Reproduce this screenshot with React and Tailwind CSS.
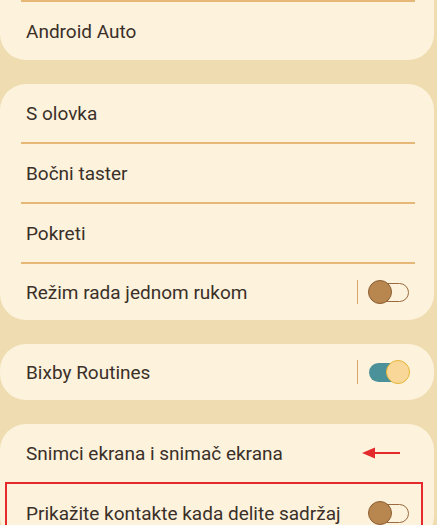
import React from "react";

function Divider() {
  return <div className="ml-[21px] mr-[19px] h-[2px] bg-[#e6b878]" />;
}

function Toggle({ on }) {
  if (on) {
    return (
      <div className="relative h-[19px] w-[40px] rounded-full bg-[#4b9199]">
        <div className="absolute right-[-1px] top-1/2 h-[24px] w-[24px] -translate-y-1/2 rounded-full border-[1.5px] border-[#e6b636] bg-[#f9d799]" />
      </div>
    );
  }
  return (
    <div className="relative h-[19px] w-[40px] rounded-full border-[1.5px] border-[#9b6b3f]">
      <div className="absolute left-[-2px] top-1/2 h-[24px] w-[24px] -translate-y-1/2 rounded-full border border-[#8c5d33] bg-[#b8874f]" />
    </div>
  );
}

function Row({ label, toggle, on, sep = true, last, children }) {
  return (
    <div
      className={`flex items-center pl-[26px] pr-[25px] ${last ? "h-[56px]" : "h-[58px]"}`}
    >
      <span className="flex-1 pt-[1px] text-[19px] leading-none text-[#3a3029]">{label}</span>
      {children}
      {toggle && (
        <div className="flex items-center">
          {sep && <div className="mr-[11px] h-[24px] w-px bg-[#d9a866]" />}
          <Toggle on={on} />
        </div>
      )}
    </div>
  );
}

function Card({ children, top = true }) {
  return (
    <div
      className={`relative mr-[3px] bg-[#fdf2dc] ${top ? "rounded-[26px]" : "rounded-b-[26px]"}`}
    >
      {children}
    </div>
  );
}

export default function App() {
  return (
    <div
      className="h-[525px] w-[437px] overflow-hidden bg-[#efdcb0]"
      style={{ fontFamily: "Roboto, 'Noto Sans', sans-serif" }}
    >
      <div className="flex flex-col gap-[24px]">
        <Card top={false}>
          <Divider />
          <Row label="Android Auto" />
        </Card>

        <Card>
          <Row label="S olovka" />
          <Divider />
          <Row label="Bočni taster" />
          <Divider />
          <Row label="Pokreti" />
          <Divider />
          <Row label="Režim rada jednom rukom" toggle last />
        </Card>

        <Card>
          <Row label="Bixby Routines" toggle on last />
        </Card>

        <Card>
          <Row label="Snimci ekrana i snimač ekrana">
            <svg width="40" height="14" viewBox="0 0 40 14" className="mr-[8px]">
              <path d="M12 7 H39" stroke="#e52a2e" strokeWidth="2" />
              <path d="M1 7 L14 1.5 L14 12.5 Z" fill="#e52a2e" />
            </svg>
          </Row>
          <Divider />
          <Row label="Prikažite kontakte kada delite sadržaj" toggle sep={false} />
          <div className="pointer-events-none absolute left-[5px] right-[11px] top-[58px] h-[80px] border-[2.5px] border-[#e52a2e]" />
        </Card>
      </div>
    </div>
  );
}
